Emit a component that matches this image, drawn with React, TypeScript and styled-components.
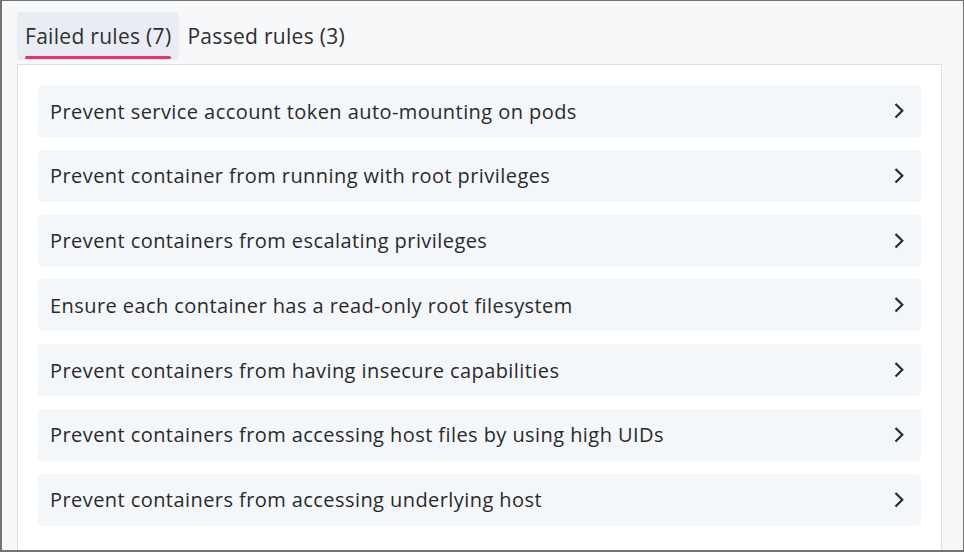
import React from "react";
import styled, { createGlobalStyle } from "styled-components";

const Global = createGlobalStyle`
  html, body { margin: 0; padding: 0; background: #f7f8fa; }
  * { box-sizing: border-box; }
`;

const Frame = styled.div`
  width: 964px;
  height: 552px;
  overflow: hidden;
  background: #f7f8fa;
  border-style: solid;
  border-color: #737373;
  border-width: 1px 1px 2px 2px;
  padding: 11px 21px 0 15px;
  font-family: "Open Sans", "Liberation Sans", sans-serif;
  color: #2a2a2a;
`;

const TabList = styled.div`
  display: flex;
  align-items: stretch;
  height: 48px;
  margin-bottom: 4px;
`;

const Tab = styled.div<{ $active?: boolean }>`
  position: relative;
  display: flex;
  align-items: center;
  padding: 0 8px 1px;
  font-size: 21px;
  letter-spacing: 0.3px;
  color: #2f2f2f;
  border-radius: 4px;
  background: ${(p) => (p.$active ? "#e9edf3" : "transparent")};
  &::after {
    content: "";
    display: ${(p) => (p.$active ? "block" : "none")};
    position: absolute;
    left: 8px;
    right: 8px;
    bottom: 1px;
    height: 3px;
    border-radius: 2px;
    background: #f0306b;
  }
`;

const Card = styled.div`
  background: #ffffff;
  border: 1px solid #dedfe1;
  padding: 20px 20px 40px;
  display: flex;
  flex-direction: column;
  gap: 12.8px;
`;

const Row = styled.div`
  height: 52px;
  display: flex;
  align-items: center;
  justify-content: space-between;
  padding: 0 10px 0 12px;
  background: #f4f7fa;
  border-radius: 4px;
  font-size: 20px;
  letter-spacing: 0.43px;
  color: #2a2a2a;
`;

const Chevron = () => (
  <svg width="24" height="24" viewBox="0 0 24 24" fill="none" stroke="#2b2b2b" strokeWidth="2.2" strokeLinecap="square" strokeLinejoin="miter">
    <path d="M9.3 5.7 15.3 11.7 9.3 17.7" />
  </svg>
);

const rules = [
  "Prevent service account token auto-mounting on pods",
  "Prevent container from running with root privileges",
  "Prevent containers from escalating privileges",
  "Ensure each container has a read-only root filesystem",
  "Prevent containers from having insecure capabilities",
  "Prevent containers from accessing host files by using high UIDs",
  "Prevent containers from accessing underlying host",
];

export default function App() {
  return (
    <>
      <Global />
      <Frame>
        <TabList>
          <Tab $active>Failed rules (7)</Tab>
          <Tab>Passed rules (3)</Tab>
        </TabList>
        <Card>
          {rules.map((r) => (
            <Row key={r}>
              <span>{r}</span>
              <Chevron />
            </Row>
          ))}
        </Card>
      </Frame>
    </>
  );
}
